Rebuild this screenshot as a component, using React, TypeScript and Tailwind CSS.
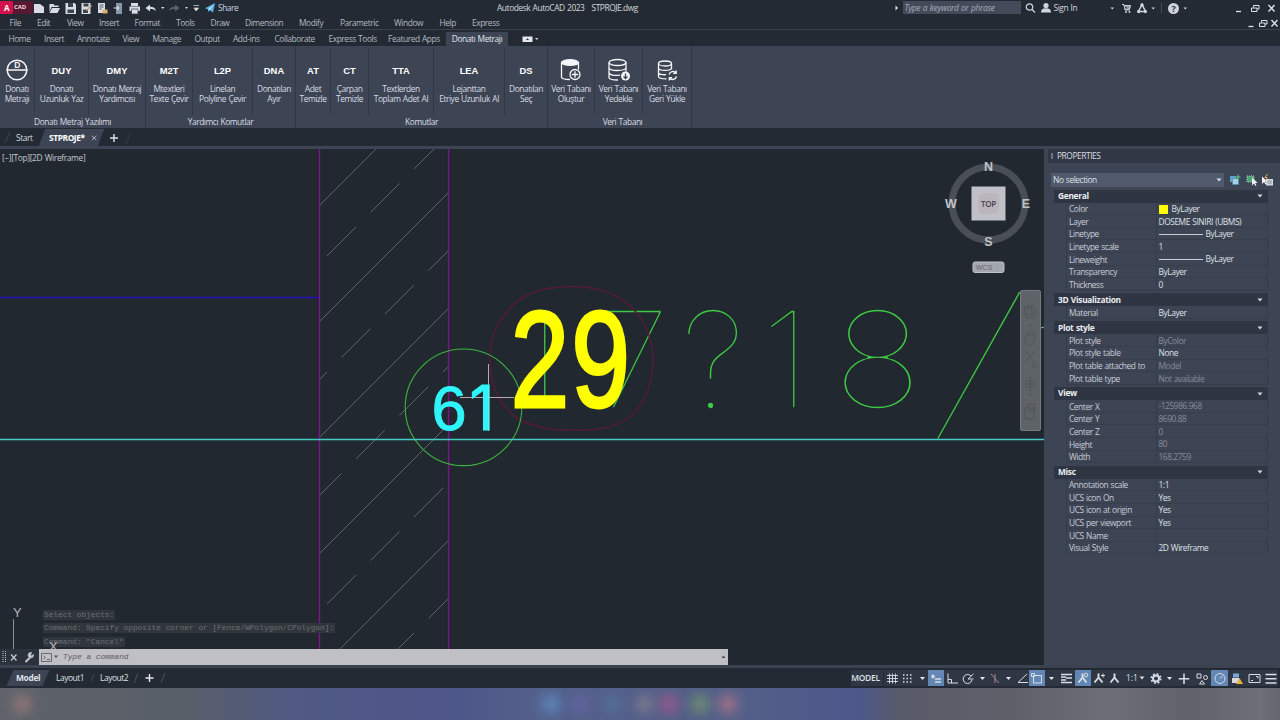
import React from "react";
import clsx from "clsx";

const menus = [
  ["File", "w-[27.5px]"],
  ["Edit", "w-[30px]"],
  ["View", "w-[32px]"],
  ["Insert", "w-[35.5px]"],
  ["Format", "w-[41.5px]"],
  ["Tools", "w-[34.5px]"],
  ["Draw", "w-[34.5px]"],
  ["Dimension", "w-[54px]"],
  ["Modify", "w-[41px]"],
  ["Parametric", "w-[54px]"],
  ["Window", "w-[45.5px]"],
  ["Help", "w-[32.5px]"],
  ["Express", "w-[40px]"],
];

const ribbonTabs = [
  ["Home", "w-[35.5px]"],
  ["Insert", "w-[33px]"],
  ["Annotate", "w-[45.5px]"],
  ["View", "w-[30px]"],
  ["Manage", "w-[42px]"],
  ["Output", "w-[38.5px]"],
  ["Add-ins", "w-[41.5px]"],
  ["Collaborate", "w-[54px]"],
  ["Express Tools", "w-[59.5px]"],
  ["Featured Apps", "w-[58px]"],
];

type Tool = { code?: string; icon?: React.ReactNode; lines: string[]; w: string };

const DiameterIcon = () => (
  <svg width="24" height="24" viewBox="0 0 24 24" fill="none" stroke="#f4f5f8" strokeWidth="1.5">
    <circle cx="12" cy="12" r="9.800" />
    <path d="M1.500 12h21" />
    <text x="12" y="9.800" fontSize="8.500" fontWeight="700" fontFamily="Liberation Sans, sans-serif" fill="#f4f5f8" stroke="none" textAnchor="middle">
      D
    </text>
  </svg>
);

const DbAddIcon = () => (
  <svg width="24" height="24" viewBox="0 0 24 24" fill="none" stroke="#f4f5f8" strokeWidth="1.3">
    <ellipse cx="11" cy="4.500" rx="8.500" ry="2.800" fill="#f4f5f8" />
    <path d="M2.500 4.500v14.500c0 1.600 4 2.500 8.500 2.500M19.500 4.500v7" />
    <circle cx="16" cy="16.500" r="5" fill="#3d4454" />
    <path d="M16 13.300v6.400M12.800 16.500h6.400" />
  </svg>
);

const DbDownIcon = () => (
  <svg width="24" height="24" viewBox="0 0 24 24" fill="none" stroke="#f4f5f8" strokeWidth="1.300">
    <ellipse cx="10.500" cy="4.500" rx="8.500" ry="3" />
    <path d="M2 4.500v15c0 1.600 4 2.500 9 2.500M19 4.500v9M2 9.500c0 4 17 4 17 0M2 14.500c0 2.500 6 3.500 11 2.600" />
    <circle cx="18.500" cy="18" r="4.500" fill="#f4f5f8" stroke="none" />
    <path d="M18.500 15.500v5M16.500 18.500l2 2 2-2" stroke="#3d4454" />
  </svg>
);

const DbSyncIcon = () => (
  <svg width="24" height="24" viewBox="0 0 24 24" fill="none" stroke="#f4f5f8" strokeWidth="1.300">
    <ellipse cx="10" cy="5.500" rx="6.500" ry="2.500" />
    <path d="M3.500 5.500v13c0 1.400 3 2.400 8 2.400M16.500 5.500v6M3.500 10c0 3.200 13 3.200 13 0M3.500 14.500c0 1.600 3.500 2.500 7.500 2.200" />
    <path d="M14 16.500a4 4 0 0 1 7-1.500M21.200 12.500v2.800h-2.800M21.500 18.500a4 4 0 0 1-7 1.500M14.300 22.500v-2.800h2.800" />
  </svg>
);

const panels: { title: string; tools: Tool[]; pad?: string }[] = [
  {
    title: "Donatı Metraj Yazılımı",
    tools: [
      { icon: <DiameterIcon />, lines: ["Donatı", "Metrajı"], w: "w-[35px]" },
      { code: "DUY", lines: ["Donatı", "Uzunluk Yaz"], w: "w-[54px]" },
      { code: "DMY", lines: ["Donatı Metraj", "Yardımcısı"], w: "w-[57px]" },
    ],
  },
  {
    title: "Yardımcı Komutlar",
    tools: [
      { code: "M2T", lines: ["Mtextleri", "Texte Çevir"], w: "w-[47px]" },
      { code: "L2P", lines: ["Lineları", "Polyline Çevir"], w: "w-[60px]" },
      { code: "DNA", lines: ["Donatıları", "Ayır"], w: "w-[43px]" },
    ],
  },
  {
    title: "Komutlar",
    tools: [
      { code: "AT", lines: ["Adet", "Temizle"], w: "w-[35px]" },
      { code: "CT", lines: ["Çarpan", "Temizle"], w: "w-[38px]" },
      { code: "TTA", lines: ["Textlerden", "Toplam Adet Al"], w: "w-[65px]" },
      { code: "LEA", lines: ["Lejanttan", "Etriye Uzunluk Al"], w: "w-[71px]" },
      { code: "DS", lines: ["Donatıları", "Seç"], w: "w-[43px]" },
    ],
  },
  {
    title: "Veri Tabanı",
    pad: "pl-[6px]",
    tools: [
      { icon: <DbAddIcon />, lines: ["Veri Tabanı", "Oluştur"], w: "w-[47px]" },
      { icon: <DbDownIcon />, lines: ["Veri Tabanı", "Yedekle"], w: "w-[48px]" },
      { icon: <DbSyncIcon />, lines: ["Veri Tabanı", "Geri Yükle"], w: "w-[49px]" },
    ],
  },
];

type Row = { label: string; value: string; dim?: boolean; swatch?: boolean; line?: boolean };

const sections: { title: string; rows: Row[] }[] = [
  {
    title: "General",
    rows: [
      { label: "Color", value: "ByLayer", swatch: true },
      { label: "Layer", value: "DOSEME SINIRI (UBMS)" },
      { label: "Linetype", value: "ByLayer", line: true },
      { label: "Linetype scale", value: "1" },
      { label: "Lineweight", value: "ByLayer", line: true },
      { label: "Transparency", value: "ByLayer" },
      { label: "Thickness", value: "0" },
    ],
  },
  { title: "3D Visualization", rows: [{ label: "Material", value: "ByLayer" }] },
  {
    title: "Plot style",
    rows: [
      { label: "Plot style", value: "ByColor", dim: true },
      { label: "Plot style table", value: "None" },
      { label: "Plot table attached to", value: "Model", dim: true },
      { label: "Plot table type", value: "Not available", dim: true },
    ],
  },
  {
    title: "View",
    rows: [
      { label: "Center X", value: "-125986.968", dim: true },
      { label: "Center Y", value: "8690.88", dim: true },
      { label: "Center Z", value: "0", dim: true },
      { label: "Height", value: "80", dim: true },
      { label: "Width", value: "168.2759", dim: true },
    ],
  },
  {
    title: "Misc",
    rows: [
      { label: "Annotation scale", value: "1:1" },
      { label: "UCS icon On", value: "Yes" },
      { label: "UCS icon at origin", value: "Yes" },
      { label: "UCS per viewport", value: "Yes" },
      { label: "UCS Name", value: "" },
      { label: "Visual Style", value: "2D Wireframe" },
    ],
  },
];

const Caret = ({ className = "" }: { className?: string }) => (
  <svg width="6" height="4" viewBox="0 0 6 4" className={clsx("shrink-0", className)}>
    <path d="M0.500 0.500h5L3 3.500z" fill="#d5d9e0" />
  </svg>
);

function TitleBar() {
  return (
    <div className="flex h-[15px] shrink-0 items-center">
      <div className="flex h-[13px] w-[13px] shrink-0 items-center justify-center rounded-r-[2px] bg-[#d4124e] text-[8px] font-bold text-white">
        A
      </div>
      <span className="h-[13px] w-[20px] shrink-0 rounded-r-[2px] bg-[#571831] pl-px text-[6px] leading-[13px] font-bold tracking-[-0.1px] text-[#efd5dd]">
        CAD
      </span>
      <svg width="172" height="14" viewBox="33 0 172 14" fill="#d9dce2" className="shrink-0">
        <path d="M34 3h6l4 3v6H34z" />
        <path d="M49.500 3h4l1 1.500h4V6h-7l-2 5zM52 7h8l-2.500 5H49.500z" />
        <path d="M65.500 2h9l1.500 1.500V13H65.500z" />
        <path d="M68 2h5v4h-5zM67.500 8.500H74V12h-6.500z" fill="#3b4351" />
        <path d="M81.500 2h9v11h-9z" />
        <path d="M83.500 2.500h5v3h-5zM83 8.500h5V12h-5z" fill="#3b4351" />
        <path d="M86 9l5-5 1 1-5 5z" fill="#c7a27c" />
        <path d="M98 2h7v10h-7z" />
        <path d="M99.500 4h4M99.500 6h4M99.500 8h2" stroke="#525a68" />
        <path d="M102.500 8.500h5v4h-5z" fill="#d8b26a" />
        <path d="M116 2h6v11h-6z" fill="#8998a6" />
        <path d="M113.500 7h5M117 5l2 2-2 2" stroke="#e1e5ea" fill="none" />
        <path d="M131 2h7v3h-7zM129.500 5.500h10.500V10H129.500z" />
        <path d="M131.500 8h6.500v5h-6.500z" stroke="#303846" strokeWidth=".7" />
        <path d="M145.500 7l4.500-3.500v2.200c3.500 0 5.500 1.300 6 4.300-1.500-1.500-3-1.900-6-1.900v2.400z" />
        <path d="M161 6h3.500l-1.700 2zM185 6h3l-1.500 2z" />
        <path d="M179.500 7L175 3.500v2.200c-3.500 0-5.500 1.300-6 4.300 1.500-1.500 3-1.900 6-1.900v2.400z" fill="#59616f" />
        <path d="M193.500 4.500h5.500M194 7h4.500l-2.300 3z" stroke="#d9dce2" strokeWidth=".7" />
      </svg>
      <svg width="10" height="10" viewBox="0 0 10 10" className="shrink-0">
        <path d="M0 5.200L10 0 8 9.500 4.700 7.200 3 9V6.200z" fill="#5ab1e8" />
        <path d="M3 6.200L8.500 1.700 4.700 7.200z" fill="#c6e4f6" />
      </svg>
      <span className="w-[282px] shrink-0 pt-px pl-[3px] text-[#c3d3e2]">Share</span>
      <span className="w-[94.500px] shrink-0 pt-[2px] whitespace-nowrap text-[#d3d7dd]">Autodesk AutoCAD 2023</span>
      <span className="w-[301px] shrink-0 pt-[2px] text-[#d3d7dd]">STPROJE.dwg</span>
      <svg width="4" height="6" viewBox="0 0 4 6" className="mr-[4px] ml-[2px] shrink-0">
        <path d="M.5.500v5L3 3z" fill="#dfe2e8" />
      </svg>
      <div className="h-[13px] w-[118px] shrink-0 bg-[#434b5a] pl-[2px] leading-[13px] tracking-[-0.3px] text-[#a5abb8] italic">Type a keyword or phrase</div>
      <svg width="26" height="13" viewBox="0 0 26 13" fill="none" stroke="#cfd3da" strokeWidth="1.200" className="ml-[4px] shrink-0">
        <circle cx="4.500" cy="6" r="3.200" />
        <path d="M7 8.500l3 3" />
        <circle cx="21" cy="4.500" r="2.600" fill="#cfd3da" stroke="none" />
        <path d="M16 11.500c0-3.500 2-4.300 5-4.300s5 .8 5 4.300z" fill="#cfd3da" stroke="none" />
      </svg>
      <span className="w-[56px] shrink-0 pt-[2px] pl-[3px] text-[#d3d7dd]">Sign In</span>
      <svg width="80" height="14" viewBox="1109 0 80 14" fill="#cfd3da" className="shrink-0">
        <path d="M1112.500 6.500h3.500l-1.700 2zM1153.500 6.500h3.500l-1.700 2zM1185.500 6.500h3.500l-1.700 2z" />
        <path d="M1124 3.500h2l1 5.500h5M1126.500 4.500h6l-.8 3.500h-4.500" stroke="#cfd3da" fill="#8f97a3" />
        <circle cx="1128" cy="11" r="1" />
        <circle cx="1131.500" cy="11" r="1" />
        <path d="M1144 3.500l-3.500 7h7z" fill="none" stroke="#cfd3da" strokeWidth="1.500" />
        <circle cx="1144" cy="4" r="1.700" />
        <circle cx="1140.700" cy="10.500" r="1.700" />
        <circle cx="1147.300" cy="10.500" r="1.700" />
        <path d="M1163.500 1.500v11" stroke="#454d5a" />
        <circle cx="1175.500" cy="7.500" r="5.500" />
        <text x="1175.500" y="10.800" fontSize="9" fontWeight="700" fill="#2a313c" textAnchor="middle">
          ?
        </text>
      </svg>
      <svg width="42" height="12" viewBox="0 0 42 12" fill="none" stroke="#dfe2e8" className="mr-[4px] ml-auto shrink-0">
        <path d="M2 9.500h5" strokeWidth="1.300" />
        <path d="M17.500 6h5.500v3.500h-5.500zM19.500 5.500V3.500H25v3.500h-2" />
        <path d="M34.500 3l6 6.500M40.500 3l-6 6.500" strokeWidth="1.400" />
      </svg>
    </div>
  );
}

function Ribbon() {
  return (
    <div className="flex h-[82px] shrink-0 bg-[#3d4454] text-[#d9dce3]">
      {panels.map((p) => (
        <div key={p.title} className="flex flex-col border-r border-[#2f3644]">
          <div className="flex h-[69px] pt-[2px]">
            {p.tools.map((t, i) => (
              <div
                key={i}
                className={clsx(
                  "flex shrink-0 flex-col items-center border-r pt-[9px] text-center",
                  t.w,
                  i === p.tools.length - 1 ? "-mr-px border-transparent" : "border-[#303745]"
                )}
              >
                <div className="flex h-[26.500px] shrink-0 items-center justify-center">
                  {t.icon || (
                    <span className="font-['Liberation_Sans',Arial,sans-serif] text-[9.400px] font-bold tracking-normal text-white">{t.code}</span>
                  )}
                </div>
                {t.lines.map((l) => (
                  <span key={l} className="h-[10px] leading-[10px] whitespace-nowrap">
                    {l}
                  </span>
                ))}
              </div>
            ))}
          </div>
          <div className={clsx("pt-[0.500px] text-center leading-[12px]", p.pad)}>{p.title}</div>
        </div>
      ))}
    </div>
  );
}

const HATCH_STEP = 116;

function Hatch() {
  const lines: React.ReactNode[] = [];
  for (let k = -3; k < 5; k++) {
    const solid = 641 + k * HATCH_STEP;
    lines.push(<path key={`s${k}`} d={`M448 ${solid - 448}L320 ${solid - 320}`} />);
    const dashed = 699 + k * HATCH_STEP;
    for (let j = -6; j < 6; j++) {
      const x = 385 + 14.5 * k + 43.5 * j;
      lines.push(<path key={`d${k}-${j}`} d={`M${x} ${dashed - x}L${x + 29} ${dashed - x - 29}`} />);
    }
  }
  return (
    <g clipPath="url(#wall)" stroke="#5d6369" strokeWidth="1">
      {lines}
    </g>
  );
}

function Drawing() {
  return (
    <svg width="1044" height="516" viewBox="0 149 1044 516" fill="none" className="absolute inset-0 tracking-normal">
      <clipPath id="wall">
        <rect x="320" y="149" width="128" height="516" />
      </clipPath>
      <Hatch />
      <path d="M0 297.500h319" stroke="#2412b4" strokeWidth="1.500" />
      {/* canvas-coloured stroke thins the dimension text down to a hairline */}
      <g fill="#3ccb42" stroke="#212830" strokeWidth="1.700" fontSize="135" fontWeight="100" fontFamily="Inter, sans-serif">
        <text y="408" x="512 596 681 761">
          17?1
        </text>
        <text transform="translate(832.500 408) scale(1.120 1)">8</text>
        <text transform="translate(935 421) skewX(-16.200)" fontSize="171" strokeWidth="2.600">
          /
        </text>
      </g>
      <path d="M1038 329l6-2" stroke="#7fc48a" />
      <path
        d="M570 286.500C600 286 622 296 636 312C650 328 653 345 653 362C652 385 645 404 630 417C612 430 590 431 568 430C540 430 518 423 505 407C492 390 489 370 490 352C492 330 503 312 520 299C536 289 552 287 570 286.500z"
        stroke="#541c35"
        strokeWidth="1.500"
      />
      <path d="M319.500 149v516M448.500 149v516" stroke="#8c0f93" strokeWidth="1.300" />
      <circle cx="463.500" cy="407.300" r="58.300" stroke="#3eb23f" strokeWidth="1.100" />
      <path d="M0 439.500h1044" stroke="#45c9c6" strokeWidth="1.500" />
      <text
        transform="translate(510.500 406.500) scale(.775 1)"
        fontSize="136.500"
        letterSpacing="2.500"
        fontFamily="Liberation Sans, Arial, sans-serif"
        fill="#ffff00"
        stroke="#ffff00"
        strokeWidth="3"
      >
        29
      </text>
      <path d="M488.500 364v67M460 397.500h54" stroke="#b9a9b0" strokeWidth="1" />
      <g fill="#2ff5fa" stroke="#2ff5fa" strokeWidth="1">
        <text x="431.500" y="430" fontSize="63" fontFamily="Liberation Sans, Arial, sans-serif">
          6
        </text>
        <text x="469.500" y="430" fontSize="61.500" fontFamily="Inter, sans-serif">
          1
        </text>
      </g>
      <path d="M488.500 386v44" stroke="#8fdde3" strokeWidth=".8" />
      <g stroke="#a9adb1" strokeWidth="1">
        <path d="M13.500 619v38h37" strokeOpacity=".8" />
        <path d="M11 650.500h6v5h-6z" strokeOpacity=".6" />
      </g>
    </svg>
  );
}

function ViewCube() {
  return (
    <div className="absolute top-[10px] left-[940px] h-[116px] w-[96px] tracking-normal">
      <svg width="96" height="116" viewBox="940 159 96 116" fill="none">
        <circle cx="988.500" cy="203.500" r="36.500" stroke="#4a4f56" strokeWidth="7" />
        <rect x="971.500" y="186.500" width="34" height="34" fill="#c0c0c7" />
        <rect x="978" y="193" width="21" height="21" rx="5" fill="#bdb5be" />
        <g fontFamily="Liberation Sans, Arial, sans-serif" fontWeight="700" textAnchor="middle" fill="#c0c3c8" fontSize="12.500">
          <text x="988.500" y="170.500">N</text>
          <text x="988.500" y="245.500">S</text>
          <text x="951" y="208">W</text>
          <text x="1026" y="208">E</text>
        </g>
        <text x="988.500" y="206.500" textAnchor="middle" fontSize="8" fontWeight="600" letterSpacing="-.3" fill="#41434c">
          TOP
        </text>
        <rect x="973" y="262" width="31" height="10.500" rx="2" fill="#a3a6ac" stroke="#c0c2c7" />
        <text x="976" y="269.500" fontSize="7" fontFamily="Liberation Sans, sans-serif" fill="#62666d">
          WCS
        </text>
      </svg>
    </div>
  );
}

function NavBar() {
  return (
    <div className="absolute top-[141px] left-[1020px] h-[141px] w-[21px] rounded-[2px] border border-[#767a80] bg-[#62666b]/95">
      <svg width="19" height="139" viewBox="0 0 19 139" fill="none" stroke="#50555b">
        <path d="M4 15h8l3 4-2 8H6l-3-5zM6 17h5v7H6z" />
        <path d="M5 52c-3-4 2-8 1-11M8 46v-6M11 46v-6M14 47v-5M5 52c3 4 8 2 9-5" />
        <path d="M4 60l10 11M14 60L4 71M13 72a2 2 0 1 0 .1 0" />
        <path d="M9.500 85v16M3 93h13M5 90h9M5 96h9" />
        <path d="M4 117h9v11H4zM8 113h6v7H8z" />
        <path d="M8 34h3M8 104h3" />
      </svg>
    </div>
  );
}

function CommandLine() {
  return (
    <div className="absolute bottom-0 left-0 w-[729px] font-['Liberation_Mono',monospace] text-[7.800px] tracking-normal [word-spacing:0]">
      <div className="mb-[-1px] ml-[43px] flex flex-col items-start text-[#6b7075]">
        {["Select objects:", "Command: Specify opposite corner or [Fence/WPolygon/CPolygon]:", 'Command: "Cancel"'].map((l) => (
          <span key={l} className="mb-[3.300px] h-[10px] bg-[#31363c] px-px leading-[10px] whitespace-nowrap">
            {l}
          </span>
        ))}
      </div>
      <div className="flex h-[16px]">
        <div className="h-[16px] w-[39px] bg-[#2c323d]">
          <svg width="39" height="16" viewBox="0 0 39 16" fill="none" stroke="#c3c6cb" strokeWidth="1.300">
            <path d="M3 2v12M5.500 2v12" strokeDasharray="1 1" strokeWidth="1" />
            <path d="M11 5.500l5.500 6M16.500 5.500l-5.500 6" />
            <path d="M25.500 13l4.500-4.500" strokeWidth="2" />
            <path d="M33.500 5.500a2.700 2.700 0 1 1-2-2L30.500 6l1 1z" fill="#c3c6cb" strokeWidth=".8" />
          </svg>
        </div>
        <div className="flex h-[16px] w-[689px] items-center bg-[#c1bfc6] text-[#5b5a62]">
          <svg width="20" height="12" viewBox="0 0 20 12" fill="none" stroke="#6b6971">
            <path d="M2.500 2.500h10v8h-10zM4.500 5l2 1.500-2 1.500M8 8.500h3" />
            <path d="M15 4.500h4l-2 2.500z" fill="#504f56" stroke="none" />
          </svg>
          <span className="pt-[2px] pl-[4px] italic">Type a command</span>
          <svg width="5" height="4" viewBox="0 0 5 4" className="mr-[2px] ml-auto">
            <path d="M.5 3h4L2.500.500z" fill="#4e4d54" />
          </svg>
        </div>
      </div>
    </div>
  );
}

function Properties() {
  return (
    <div className="w-[236px] shrink-0 bg-[#3d4454] text-[#c9cdd6]">
      <div className="ml-[4px] flex h-[14px] items-center bg-[#313744] pl-[3px] text-[#d9dce2]">
        <span className="mr-[4px] h-[6px] w-[2px] bg-[#6c7382]" />
        PROPERTIES
      </div>
      <div className="mt-[10px] ml-[7px] flex h-[14px] items-center">
        <div className="flex h-[14px] w-[173px] items-center justify-between bg-[#505a6c] pr-[2px] pl-[2px] text-[#dde0e6]">
          No selection
          <Caret />
        </div>
        <svg width="52" height="14" viewBox="0 0 52 14" fill="none" className="ml-px">
          <path d="M5 3h6v6H5z" fill="#5fa2c6" />
          <path d="M7.500 5.500h6v6h-6z" fill="#a6cfe4" stroke="#4d89ad" strokeWidth=".7" />
          <path d="M13 1.500v5M10.500 4h5" stroke="#5fd08e" />
          <path d="M22 3h7v6h-7z" fill="#4aa276" stroke="#a8d8bf" strokeDasharray="1 1" />
          <path d="M27 4.500v8l2-2 1.500 2.500 1-.6-1.300-2.300h2.500z" fill="#eef0f3" />
          <path d="M41 6h7v6.500h-7z" fill="#d6d9de" />
          <path d="M42.500 8h4.500M42.500 10h4.500" stroke="#6b7280" strokeWidth=".7" />
          <path d="M37 3.500v7.500l2-2 1.300 2.300 1-.6-1.300-2.200h2.300z" fill="#f3f4f6" />
          <path d="M42.500 1l-2.500 3.500h2L41 7" stroke="#e3b45c" />
        </svg>
      </div>
      <div className="mt-[2.500px] ml-[10px] w-[214px]">
        {sections.map((s) => (
          <div key={s.title} className="mb-[2.3px]">
            <div className="flex h-[13px] items-center justify-between bg-[#2f3542] pr-[5px] pl-[4px] font-bold tracking-[-0.3px] text-[#eceef2]">
              {s.title}
              <Caret />
            </div>
            <div className="ml-[12px] border-l border-[#353c4a]">
              {s.rows.map((r) => (
                <div key={r.label} className="flex h-[12.65px] items-center border-b border-[#363d4b]">
                  <span className="w-[89px] shrink-0 pt-[2px] pl-[2px] whitespace-nowrap">{r.label}</span>
                  <span
                    className={clsx(
                      "flex h-full grow items-center border-x border-[#353c4a] pt-[1.500px] pl-[1.500px] whitespace-nowrap",
                      r.dim ? "text-[#868c9a]" : "text-[#dde0e6]"
                    )}
                  >
                    {r.swatch && <i className="mr-[4px] h-[9px] w-[9px] bg-[#ffff00]" />}
                    {r.line && <i className="mr-[3px] h-px w-[44px] bg-[#c9cdd6]" />}
                    {r.value}
                  </span>
                </div>
              ))}
            </div>
          </div>
        ))}
      </div>
    </div>
  );
}

const person = "M7.500 2.500v4M7.500 6.500L3.500 11.500M7.500 6.500l4 5";

type Cell = { w: string; on?: boolean; d: React.ReactNode };

const caret = <path d="M6 6h5l-2.500 3z" fill="#e4e7ec" stroke="none" />;

const statusCells: Cell[] = [
  { w: "w-[16px]", d: <path d="M5.500 2.500v10M8.500 2.500v10M11.500 2.500v10M3 4.500h11M3 7.500h11M3 10.500h11" strokeWidth=".9" /> },
  { w: "w-[16px]", d: <path d="M3 4h10M3 7.500h10M3 11h10" strokeDasharray="1.500 2" strokeWidth="1.400" /> },
  { w: "w-[12px]", d: caret },
  { w: "w-[16px]", on: true, d: <path d="M3 5.500h4M5 3.500v4M7 8h6M7 11h6" strokeWidth="1.700" /> },
  { w: "w-[16px]", d: <path d="M4 2.500v9.500h10M4 8.500h3.500v3.500" /> },
  { w: "w-[16px]", d: <path d="M12 9a4.500 4.500 0 1 1-1-4M13.500 3L8 8h5.500" /> },
  { w: "w-[12px]", d: caret },
  { w: "w-[14px]", d: <path d="M8 3v9M4 3l4 4.500 4 4.500" stroke="#aa8a8d" /> },
  { w: "w-[12px]", d: caret },
  { w: "w-[15px]", d: <path d="M13 3L4 11.500h10" /> },
  { w: "w-[16px]", on: true, d: <path d="M4.500 4.500h8v7.500h-8zM2.500 2.500h3v3h-3z" /> },
  { w: "w-[12px]", d: caret },
  { w: "w-[18px]", d: <path d="M3 3.500h11M3 6h5M8 7h6M3 9h5M3 11.500h11" strokeWidth="1.500" /> },
  {
    w: "w-[16px]",
    on: true,
    d: (
      <>
        <path d={person} strokeWidth="1.900" />
        <circle cx="11" cy="4" r="1.800" />
      </>
    ),
  },
  {
    w: "w-[16px]",
    d: (
      <>
        <path d={person} strokeWidth="1.900" />
        <path d="M10 4.500h4M12 2.500v4" />
      </>
    ),
  },
  { w: "w-[16px]", d: <path d={person} strokeWidth="1.900" /> },
];

const statusTail: Cell[] = [
  {
    w: "w-[14px]",
    d: (
      <>
        <circle cx="8" cy="7.500" r="3" strokeWidth="2" />
        <circle cx="8" cy="7.500" r="4.700" strokeDasharray="1.800 1.900" strokeWidth="1.700" />
      </>
    ),
  },
  { w: "w-[12px]", d: caret },
  { w: "w-[18px]", d: <path d="M8 2.500v10.500M2.700 7.700h10.600" strokeWidth="1.500" /> },
  {
    w: "w-[18px]",
    d: (
      <>
        <path d="M3 3h4v4H3zM8 9.500l-2.500 3.500h5z" />
        <circle cx="11.500" cy="6.500" r="2" />
      </>
    ),
  },
  {
    w: "w-[17px]",
    on: true,
    d: (
      <>
        <circle cx="8" cy="7.500" r="5" />
        <path d="M8 7.500l3-3" />
      </>
    ),
  },
  {
    w: "w-[17px]",
    d: (
      <>
        <path d="M4 2.500h6v4H4z" fill="#7da6d6" stroke="none" />
        <path d="M3 7h7v5H3z" fill="#d6d9df" stroke="none" />
        <path d="M10.500 7l3.500 6H7z" fill="#e4b43c" stroke="none" />
      </>
    ),
  },
  { w: "w-[18px]", d: <path d="M3 3.500h11v8H3zM5 9.500h2M10 5.500h2v2" /> },
  { w: "w-[15px]", d: <path d="M2.500 3.500h11M2.500 7.700h11M2.500 12h11" strokeWidth="1.600" /> },
];

const StatusCell = ({ w, on, d }: Cell) => (
  <div className={clsx("flex h-[16px] shrink-0 items-center justify-center overflow-hidden", w, on ? "bg-[#6287b5]" : "bg-[#303744]")}>
    <svg width="16" height="15" viewBox="0 0 16 15" fill="none" stroke="#d9dde4" className="shrink-0">
      {d}
    </svg>
  </div>
);

function StatusRow() {
  return (
    <div className="flex h-[20px] shrink-0 items-center bg-[#232a33] text-[#dde0e6]">
      <div className="ml-[10px] flex h-[16px] w-[36px] -skew-x-[24deg] items-center justify-center bg-[#3d4454]">
        <span className="skew-x-[24deg] font-bold tracking-[-0.300px]">Model</span>
      </div>
      <span className="w-[35px] pl-[10px]">Layout1</span>
      <span className="w-[9px] pl-[10px] text-[#4c5462]">/</span>
      <span className="w-[36px] pl-[9px]">Layout2</span>
      <svg width="40" height="14" viewBox="0 0 40 14" className="ml-[5px]" stroke="#e7e9ee">
        <path d="M2 12l4-10M29 12l4-10" stroke="#4c5462" />
        <path d="M13.500 7h8M17.500 3v8" strokeWidth="1.400" />
      </svg>
      <div className="mr-[2px] ml-auto flex items-center">
        <span className="mr-px h-[16px] w-[32px] bg-[#303744] pr-[3px] text-center leading-[16px] font-semibold tracking-[-0.200px]">MODEL</span>
        {statusCells.map((c, i) => (
          <StatusCell key={i} {...c} />
        ))}
        <div className="flex h-[16px] w-[26px] items-center justify-between bg-[#303744] pr-[4px] pl-[3px] tracking-normal">
          1:1
          <Caret />
        </div>
        {statusTail.map((c, i) => (
          <StatusCell key={i} {...c} />
        ))}
      </div>
    </div>
  );
}

// blurred app icons on the taskbar: centre x, colour
const glows: [number, string][] = [
  [22, "#94787a"],
  [551, "#5f8ac0"],
  [580, "#6464a4"],
  [612, "#54709a"],
  [645, "#7d7a8c"],
  [669, "#985a8c"],
  [700, "#6f9070"],
  [728, "#a8748a"],
];

function Taskbar() {
  return (
    <div className="h-[32px] shrink-0 bg-[linear-gradient(90deg,#5f636a_0px,#585e68_190px,#505a83_290px,#4d5589_440px,#54608a_540px,#535f88_740px,#4e578a_860px,#585b68_900px,#5f626a_1020px,#6c6f76_1110px,#5f626a_1190px,#6d7076_1260px,#63666d_1280px)]">
      <svg width="1280" height="32" viewBox="0 0 1280 32">
        <defs>
          <filter id="soft" x="-80%" y="-80%" width="260%" height="260%">
            <feGaussianBlur stdDeviation="6" />
          </filter>
        </defs>
        {glows.map(([x, c]) => (
          <circle key={x} cx={x} cy="16" r="10" fill={c} opacity=".85" filter="url(#soft)" />
        ))}
      </svg>
    </div>
  );
}

export default function App() {
  return (
    <div className="flex h-[720px] w-[1280px] flex-col overflow-hidden bg-[#232a33] font-['Open_Sans','Noto_Sans',sans-serif] text-[8.400px] leading-none tracking-[-0.430px] [word-spacing:0.6px]">
      <TitleBar />
      <div className="flex h-[15px] shrink-0 items-center border-b border-[#3b424d] pt-[2px] pl-[9.5px] text-[#b4b9c1]">
        {menus.map(([label, w]) => (
          <span key={label} className={clsx("shrink-0 whitespace-nowrap", w)}>
            {label}
          </span>
        ))}
        <svg width="34" height="12" viewBox="0 0 34 12" fill="none" stroke="#dfe2e8" className="mt-[-1px] ml-auto shrink-0">
          <path d="M2.500 9.500h5" strokeWidth="1.300" />
          <path d="M13.500 6h5.500v3.500h-5.500zM15.500 5.500V3.500H21v3.500h-2" />
          <path d="M25.500 3l6 6.500M31.500 3l-6 6.500" strokeWidth="1.400" />
        </svg>
      </div>
      <div className="flex h-[16px] shrink-0 items-end pl-[8.5px] leading-[14px] text-[#b4b9c1]">
        {ribbonTabs.map(([label, w]) => (
          <span key={label} className={clsx("shrink-0 whitespace-nowrap", w)}>
            {label}
          </span>
        ))}
        <span className="h-[14px] w-[62px] bg-[#3d4454] text-center whitespace-nowrap text-[#e1e4e9]">Donatı Metrajı</span>
        <svg width="20" height="8" viewBox="0 0 20 8" className="mb-[3px] ml-[14px]">
          <path d="M.5 1.500h10v5.500H.5z" fill="#e4e6eb" />
          <path d="M4 5h3L5.500 3.300z" fill="#2a313c" />
          <path d="M13 3h3.500l-1.700 2z" fill="#cfd3da" />
        </svg>
      </div>
      <Ribbon />
      <div className="flex h-[18px] shrink-0 items-end pt-[2px]">
        <svg width="40" height="16" viewBox="0 0 40 16" className="-mr-[24px] shrink-0">
          <path d="M5 13l5-11" stroke="#3f4653" />
        </svg>
        <span className="w-[24px] leading-[16px] text-[#d3d7dd]">Start</span>
        <div className="ml-[2px] flex h-[17px] w-[59px] -skew-x-[20deg] items-center justify-center bg-[#3d4454]">
          <span className="flex skew-x-[20deg] items-center gap-[6px] pt-[2px] pl-[2px] font-bold whitespace-nowrap text-white">
            STPROJE*
            <svg width="6" height="6" viewBox="0 0 6 6" stroke="#b0b5bf">
              <path d="M.7.700l4.600 4.600M5.300.700L.7 5.300" />
            </svg>
          </span>
        </div>
        <svg width="34" height="16" viewBox="0 0 34 16" className="ml-[4px]" stroke="#dfe2e8">
          <path d="M5 8h8M9 4v8" strokeWidth="1.400" />
          <path d="M21 14l5-11" stroke="#343b47" />
        </svg>
      </div>
      <div className="h-[3px] shrink-0 bg-[#3d4454]" />
      <div className="flex h-[516px] shrink-0">
        <div className="relative w-[1044px] shrink-0 overflow-hidden bg-[#212830]">
          <Drawing />
          <span className="absolute top-[5px] left-[2px] tracking-[-0.350px] text-[#c5c9cf]">[−][Top][2D Wireframe]</span>
          <ViewCube />
          <NavBar />
          <span className="absolute top-[457px] left-[13px] font-['Liberation_Sans',sans-serif] text-[13px] text-[#b6babf]">Y</span>
          <CommandLine />
          <span className="absolute top-[491px] left-[49px] font-['Liberation_Sans',sans-serif] text-[13px] text-[#b6babf]">X</span>
        </div>
        <Properties />
      </div>
      <div className="h-[3px] shrink-0 bg-[#3b4250]" />
      <StatusRow />
      <Taskbar />
    </div>
  );
}
